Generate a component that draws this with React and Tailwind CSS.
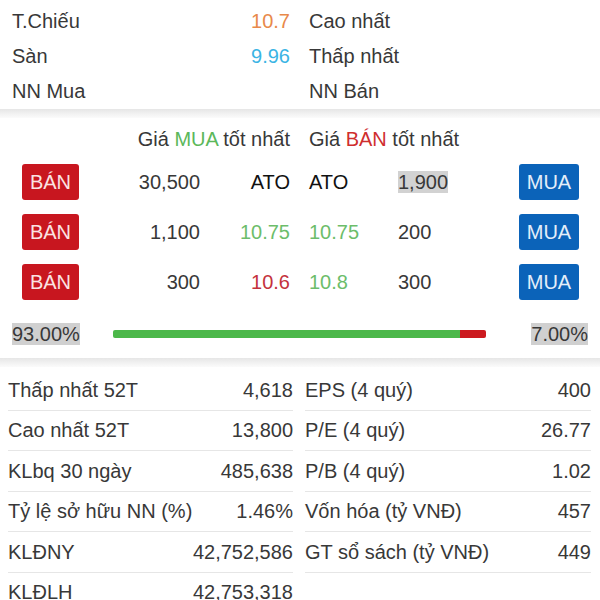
import React from "react";

const font = { fontFamily: '"Liberation Sans", Arial, sans-serif' };

const topRows = [
  { l: "T.Chiếu", v: "10.7", c: "text-[#e8894a]", r: "Cao nhất" },
  { l: "Sàn", v: "9.96", c: "text-[#3ab4e4]", r: "Thấp nhất" },
  { l: "NN Mua", v: "", c: "", r: "NN Bán" },
];

const orders = [
  { bv: "30,500", bp: "ATO", bc: "text-[#111]", sp: "ATO", sc: "text-[#111]", sv: "1,900", hl: true },
  { bv: "1,100", bp: "10.75", bc: "text-[#6cbd6a]", sp: "10.75", sc: "text-[#6cbd6a]", sv: "200" },
  { bv: "300", bp: "10.6", bc: "text-[#c4323c]", sp: "10.8", sc: "text-[#6cbd6a]", sv: "300" },
];

const stats = [
  ["Thấp nhất 52T", "4,618", "EPS (4 quý)", "400"],
  ["Cao nhất 52T", "13,800", "P/E (4 quý)", "26.77"],
  ["KLbq 30 ngày", "485,638", "P/B (4 quý)", "1.02"],
  ["Tỷ lệ sở hữu NN (%)", "1.46%", "Vốn hóa (tỷ VNĐ)", "457"],
  ["KLĐNY", "42,752,586", "GT sổ sách (tỷ VNĐ)", "449"],
  ["KLĐLH", "42,753,318", "", ""],
];

const Divider = () => (
  <div className="h-[9px] bg-gradient-to-b from-[#e6e6e6] via-[#f1f1f1] to-[#fbfbfb]" />
);

export default function App() {
  return (
    <div className="w-[600px] h-[600px] overflow-hidden bg-white text-[20px] text-[#383838]" style={font}>
      {/* price reference */}
      <div className="pt-[3px] pb-[1px]">
        {topRows.map((r) => (
          <div key={r.l} className="flex h-[35px] items-center">
            <div className="w-[300px] flex justify-between pl-[12px] pr-[10px]">
              <span>{r.l}</span>
              <span className={r.c}>{r.v}</span>
            </div>
            <div className="pl-[9px]">{r.r}</div>
          </div>
        ))}
      </div>
      <Divider />

      {/* order book */}
      <div className="pt-[2px]">
        <div className="flex h-[37px] items-center">
          <div className="w-[300px] pr-[10px] text-right">
            Giá <span className="text-[#5cb85a]">MUA</span> tốt nhất
          </div>
          <div className="pl-[9px]">
            Giá <span className="text-[#cf2e2e]">BÁN</span> tốt nhất
          </div>
        </div>
        <div>
          {orders.map((o, i) => (
            <div key={i} className="flex h-[50px] items-center">
              <div className="w-[300px] flex items-center pl-[22px]">
                <button className="w-[57px] h-[36px] rounded-[3px] bg-[#c8161f] text-[#fbe3e3] text-[20px]">
                  BÁN
                </button>
                <span className="w-[121px] text-right">{o.bv}</span>
                <span className={`w-[90px] text-right ${o.bc}`}>{o.bp}</span>
              </div>
              <div className="flex items-center pl-[9px]">
                <span className={`w-[89px] ${o.sc}`}>{o.sp}</span>
                <span className="w-[121px]">
                  <span className={o.hl ? "bg-[#d2d2d2]" : ""}>{o.sv}</span>
                </span>
                <button className="w-[60px] h-[36px] rounded-[3px] bg-[#0b63b9] text-[#e3eefa] text-[20px]">
                  MUA
                </button>
              </div>
            </div>
          ))}
        </div>
        <div className="flex h-[46px] mt-[5px] items-center px-[12px] pb-[2px]">
          <span className="bg-[#d0d0d0] leading-[22px]">93.00%</span>
          <div className="ml-[33px] w-[373px] h-[8px] flex rounded-[2px] overflow-hidden">
            <div className="w-[93%] bg-[#4cb84a]" />
            <div className="flex-1 bg-[#cc1a1f]" />
          </div>
          <span className="ml-auto bg-[#d0d0d0] leading-[22px]">7.00%</span>
        </div>
      </div>
      <Divider />

      {/* fundamentals */}
      <div className="flex px-[8px] pt-[3px]">
        {[0, 1].map((col) => (
          <div key={col} className={col === 0 ? "w-[285px]" : "w-[286px] ml-[12px]"}>
            {stats.map((s, i) => {
              const label = s[col * 2];
              const val = s[col * 2 + 1];
              if (!label) return null;
              return (
                <div
                  key={i}
                  className="flex h-[40.5px] items-center justify-between border-b border-[#e6e6e6]"
                >
                  <span>{label}</span>
                  <span>{val}</span>
                </div>
              );
            })}
          </div>
        ))}
      </div>
    </div>
  );
}
